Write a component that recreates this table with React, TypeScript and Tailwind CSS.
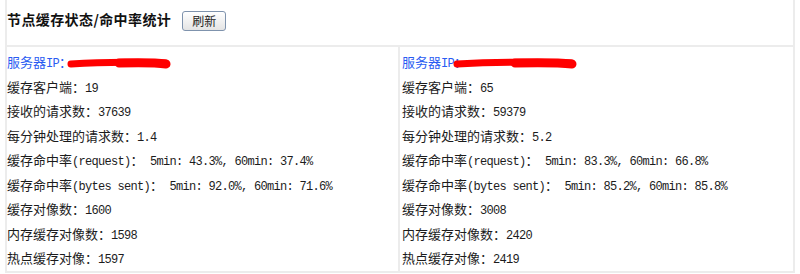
const left = [
  "缓存客户端：19",
  "接收的请求数：37639",
  "每分钟处理的请求数：1.4",
  "缓存命中率(request)： 5min: 43.3%, 60min: 37.4%",
  "缓存命中率(bytes sent)： 5min: 92.0%, 60min: 71.6%",
  "缓存对像数：1600",
  "内存缓存对像数：1598",
  "热点缓存对像：1597",
];

const right = [
  "缓存客户端：65",
  "接收的请求数：59379",
  "每分钟处理的请求数：5.2",
  "缓存命中率(request)： 5min: 83.3%, 60min: 66.8%",
  "缓存命中率(bytes sent)： 5min: 85.2%, 60min: 85.8%",
  "缓存对像数：3008",
  "内存缓存对像数：2420",
  "热点缓存对像：2419",
];

// latin runs get the narrow mono face, like the old SimSun page
function Mixed({ text }: { text: string }) {
  const parts = text.split(/([\x20-\x7e]+)/).filter(Boolean);
  return (
    <>
      {parts.map((p, i) =>
        /^[\x20-\x7e]+$/.test(p) ? (
          <span key={i} className="whitespace-pre font-['Liberation_Mono',monospace] text-[12px] tracking-[-0.7px]">
            {p}
          </span>
        ) : (
          <span key={i}>{p}</span>
        )
      )}
    </>
  );
}

function Scribble({ width, className }: { width: number; className?: string }) {
  return (
    <svg width={width} height="14" viewBox={`0 0 ${width} 14`} className={"inline-block align-middle " + (className ?? "")}>
      <path
        d={`M4 8 C ${width * 0.3} 6, ${width * 0.6} 5.5, ${width - 6} 7`}
        stroke="#ff0000"
        strokeWidth="7"
        strokeLinecap="round"
        fill="none"
      />
      <path
        d={`M${width * 0.5} 7 C ${width * 0.7} 6.5, ${width * 0.85} 6.5, ${width - 5} 8`}
        stroke="#ff0000"
        strokeWidth="9"
        strokeLinecap="round"
        fill="none"
      />
    </svg>
  );
}

function Column({ rows, scribble, shift, divider }: { rows: string[]; scribble: number; shift: string; divider?: boolean }) {
  return (
    <div className={"pt-[3px] " + (divider ? "border-r-2 border-[#ececec] pl-0" : "pl-[2px]")}>
      <div className="h-[24.5px] leading-[24.5px] whitespace-nowrap text-[#2a5cf2]">
        <Mixed text="服务器IP：" />
        <Scribble width={scribble} className={shift} />
      </div>
      {rows.map((r) => (
        <div key={r} className="h-[24.5px] leading-[24.5px] whitespace-nowrap">
          <Mixed text={r} />
        </div>
      ))}
    </div>
  );
}

export default function App() {
  return (
    <div className="h-[274px] w-[800px] overflow-hidden bg-white font-['Noto_Sans_CJK_SC',sans-serif] text-[13px] text-[#1c1c1c]">
      <div className="mx-[5px] w-[790px] border-x-2 border-b-2 border-[#ececec]">
        {/* Header */}
        <div className="flex h-[45px] items-start pt-[9px]">
          <h1 className="text-[14px] font-bold leading-[20px] tracking-[0.4px] text-[#111]">
            节点缓存状态/命中率统计
          </h1>
          <button className="ml-[11px] mt-[2px] h-[20px] w-[44px] rounded-[3px] border border-[#7f93ad] bg-gradient-to-b from-white to-[#e4e4e4] text-[12px] leading-[18px] text-[#222]">
            刷新
          </button>
        </div>

        {/* Two servers */}
        <div className="grid grid-cols-2 border-t-2 border-[#ececec]">
          <Column rows={left} scribble={104} shift="-ml-[5px]" divider />
          <Column rows={right} scribble={124} shift="-ml-[14px]" />
        </div>
      </div>
    </div>
  );
}
